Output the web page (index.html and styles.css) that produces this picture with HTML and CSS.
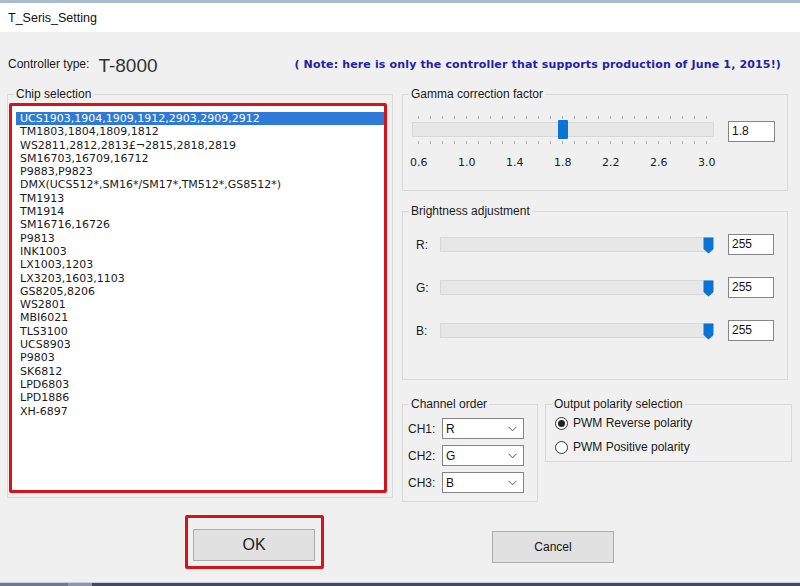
FILE: index.html
```html
<!DOCTYPE html>
<html lang="en">
  <head>
    <meta charset="UTF-8" />
    <meta name="viewport" content="width=device-width, initial-scale=1.0" />
    <title>T_Seris_Setting</title>
    <link rel="stylesheet" href="styles.css">
  </head>
  <body>
    <div class="topstrip"></div>
    <div class="titlebar">T_Seris_Setting</div>
    <div class="dialog">
      <div class="header">
        <span class="ctl-label">Controller type:</span>
        <span class="ctl-type">T-8000</span>
        <span class="note">( Note: here is only the controller that supports production of June 1, 2015!)</span>
      </div>

      <div class="main">
        <fieldset class="group chip">
          <legend>Chip selection</legend>
          <div class="redbox">
            <ul class="chiplist">
              <li class="selected">UCS1903,1904,1909,1912,2903,2909,2912</li>
              <li>TM1803,1804,1809,1812</li>
              <li>WS2811,2812,2813£¬2815,2818,2819</li>
              <li>SM16703,16709,16712</li>
              <li>P9883,P9823</li>
              <li>DMX(UCS512*,SM16*/SM17*,TM512*,GS8512*)</li>
              <li>TM1913</li>
              <li>TM1914</li>
              <li>SM16716,16726</li>
              <li>P9813</li>
              <li>INK1003</li>
              <li>LX1003,1203</li>
              <li>LX3203,1603,1103</li>
              <li>GS8205,8206</li>
              <li>WS2801</li>
              <li>MBI6021</li>
              <li>TLS3100</li>
              <li>UCS8903</li>
              <li>P9803</li>
              <li>SK6812</li>
              <li>LPD6803</li>
              <li>LPD1886</li>
              <li>XH-6897</li>
            </ul>
          </div>
        </fieldset>

        <div class="right">
          <fieldset class="group gamma">
            <legend>Gamma correction factor</legend>
            <div class="gamma-row">
              <div class="gslider">
                <div class="ticks"></div>
                <div class="track">
                  <span class="gthumb"></span>
                </div>
                <div class="ticks bottom"></div>
                <div class="scale">
                  <span>0.6</span><span>1.0</span><span>1.4</span><span>1.8</span><span>2.2</span><span>2.6</span><span>3.0</span>
                </div>
              </div>
              <div class="textbox gamma-box">1.8</div>
            </div>
          </fieldset>

          <fieldset class="group bright">
            <legend>Brightness adjustment</legend>
            <div class="brow">
              <span class="blabel">R:</span>
              <div class="track btrack">
                <svg class="bthumb" width="11" height="17" viewBox="0 0 11 17"><path d="M0.5 0.5H10.5V12L5.5 16.5L0.5 12Z" fill="#0a74d4"/></svg>
              </div>
              <div class="textbox">255</div>
            </div>
            <div class="brow">
              <span class="blabel">G:</span>
              <div class="track btrack">
                <svg class="bthumb" width="11" height="17" viewBox="0 0 11 17"><path d="M0.5 0.5H10.5V12L5.5 16.5L0.5 12Z" fill="#0a74d4"/></svg>
              </div>
              <div class="textbox">255</div>
            </div>
            <div class="brow">
              <span class="blabel">B:</span>
              <div class="track btrack">
                <svg class="bthumb" width="11" height="17" viewBox="0 0 11 17"><path d="M0.5 0.5H10.5V12L5.5 16.5L0.5 12Z" fill="#0a74d4"/></svg>
              </div>
              <div class="textbox">255</div>
            </div>
          </fieldset>

          <div class="lower">
            <fieldset class="group channel">
              <legend>Channel order</legend>
              <div class="crow">
                <span class="clabel">CH1:</span>
                <div class="combo">R<svg width="9" height="6" viewBox="0 0 9 6"><polyline points="0.5,0.8 4.5,4.8 8.5,0.8" fill="none" stroke="#555" stroke-width="1"/></svg></div>
              </div>
              <div class="crow">
                <span class="clabel">CH2:</span>
                <div class="combo">G<svg width="9" height="6" viewBox="0 0 9 6"><polyline points="0.5,0.8 4.5,4.8 8.5,0.8" fill="none" stroke="#555" stroke-width="1"/></svg></div>
              </div>
              <div class="crow">
                <span class="clabel">CH3:</span>
                <div class="combo">B<svg width="9" height="6" viewBox="0 0 9 6"><polyline points="0.5,0.8 4.5,4.8 8.5,0.8" fill="none" stroke="#555" stroke-width="1"/></svg></div>
              </div>
            </fieldset>

            <fieldset class="group polarity">
              <legend>Output polarity selection</legend>
              <div class="prow"><span class="radio checked"></span>PWM Reverse polarity</div>
              <div class="prow"><span class="radio"></span>PWM Positive polarity</div>
            </fieldset>
          </div>
        </div>
      </div>

      <div class="buttons">
        <div class="redbox okbox">
          <button class="btn ok">OK</button>
        </div>
        <button class="btn cancel">Cancel</button>
      </div>
    </div>
    <div class="taskbar"></div>
  </body>
</html>
```

FILE: styles.css
```css
* {
  box-sizing: border-box;
}
body {
  margin: 0;
  width: 800px;
  height: 586px;
  overflow: hidden;
  background-color: #f0f0f0;
  font-family: "Liberation Sans", Arial, sans-serif;
  font-size: 12px;
  color: #1a1a1a;
}
.topstrip {
  height: 3px;
  background-color: #a9bccf;
}
.titlebar {
  height: 29px;
  background-color: #fff;
  padding-left: 8px;
  display: flex;
  align-items: center;
  font-size: 12.5px;
  color: #111;
}
.dialog {
  height: 550px;
  padding: 22px 8px 0 7px;
}

/* header line */
.header {
  height: 20px;
  display: flex;
  align-items: center;
  padding-left: 1px;
}
.ctl-type {
  font-size: 19px;
  margin-left: 9px;
  padding-top: 3px;
  color: #333;
}
.note {
  margin-left: auto;
  margin-right: 11px;
  font-family: "DejaVu Sans", Verdana, sans-serif;
  font-weight: bold;
  font-size: 11px;
  letter-spacing: 0.15px;
  color: #1f23a6;
}

/* group boxes */
.main {
  display: flex;
  align-items: flex-start;
  gap: 9px;
  margin-top: 13px;
}
.group {
  margin: 0;
  padding: 0;
  border: 1px solid #d9d9d9;
  min-width: 0;
}
.group legend {
  margin-left: 6px;
  padding: 0 2px;
  line-height: 14px;
  font-size: 12px;
  color: #1a1a1a;
}
.chip {
  width: 386px;
}
.redbox {
  border: 3px solid #d3141b;
  border-radius: 2px;
}
.chip .redbox {
  margin: 2px 5px 4px 1px;
  height: 390px;
  background-color: #fff;
}
.chiplist {
  list-style: none;
  margin: 0;
  padding: 6px 0 0 4px;
  font-family: "DejaVu Sans", Verdana, sans-serif;
  font-size: 11px;
  color: #1a1a1a;
}
.chiplist li {
  height: 13.3px;
  line-height: 13px;
  padding-left: 4px;
  white-space: nowrap;
}
.chiplist li.selected {
  background-color: #2f7ad6;
  color: #fff;
}

.right {
  width: 390px;
  display: flex;
  flex-direction: column;
}
.gamma,
.bright {
  margin-right: 4px;
}

/* sliders */
.track {
  position: relative;
  height: 15px;
  background-color: #e7e7e7;
  border: 1px solid #d8d8d8;
}
.gamma-row {
  display: flex;
  align-items: flex-start;
  padding: 15px 0 20px 9px;
}
.gslider {
  width: 302px;
}
.ticks {
  height: 3px;
  width: 289px;
  margin-left: 6px;
  background: repeating-linear-gradient(90deg, #ababab 0 1px, transparent 1px 12px);
}
.gslider .track {
  margin-top: 3px;
}
.ticks.bottom {
  margin-top: 4px;
}
.gthumb {
  position: absolute;
  left: 145px;
  top: -3px;
  width: 10px;
  height: 19px;
  border-radius: 1px;
  background-color: #0a74d4;
}
.scale {
  display: flex;
  margin-top: 12px;
  margin-left: -2px;
  line-height: 14px;
  font-family: "DejaVu Sans", Verdana, sans-serif;
  font-size: 11px;
  color: #222;
}
.scale span {
  flex: none;
  width: 48px;
}
.textbox {
  width: 47px;
  height: 21px;
  padding-left: 3px;
  line-height: 19px;
  background-color: #fff;
  border: 1px solid #858585;
  color: #111;
}
.gamma-box {
  margin: 5px 0 0 14px;
}

.bright {
  margin-top: 13px;
  padding: 16px 0 38px 0;
  display: flex;
  flex-direction: column;
  gap: 22px;
}
.brow {
  display: flex;
  align-items: center;
  padding-left: 13px;
}
.blabel {
  width: 24px;
}
.btrack {
  width: 273px;
}
.bthumb {
  position: absolute;
  right: -2px;
  top: -1px;
}
.brow .textbox {
  width: 46px;
  margin-left: 15px;
}

/* channel order and polarity */
.lower {
  display: flex;
  align-items: flex-start;
  gap: 7px;
  margin-top: 17px;
}
.channel {
  width: 136px;
  padding: 7px 0 8px 0;
  display: flex;
  flex-direction: column;
  gap: 6px;
}
.crow {
  display: flex;
  align-items: center;
  padding-left: 5px;
}
.clabel {
  width: 34px;
}
.combo {
  width: 82px;
  height: 21px;
  display: flex;
  align-items: center;
  justify-content: space-between;
  padding: 0 6px 0 3px;
  background-color: #fff;
  border: 1px solid #858585;
  color: #111;
}
.polarity {
  width: 247px;
  padding: 4px 0 6px 0;
  display: flex;
  flex-direction: column;
  gap: 8px;
}
.prow {
  height: 16px;
  display: flex;
  align-items: center;
  padding-left: 9px;
}
.radio {
  width: 13px;
  height: 13px;
  margin-right: 5px;
  border: 1px solid #333;
  border-radius: 50%;
  background-color: #fff;
  display: flex;
  align-items: center;
  justify-content: center;
}
.radio.checked::after {
  content: "";
  width: 7px;
  height: 7px;
  border-radius: 50%;
  background-color: #222;
}

/* buttons */
.buttons {
  display: flex;
  align-items: flex-start;
  margin-top: 13px;
}
.okbox {
  width: 139px;
  height: 54px;
  margin-left: 178px;
  padding: 11px 0 0 5px;
}
.btn {
  width: 122px;
  height: 32px;
  background-color: #e1e1e1;
  border: 1px solid #adadad;
  font-family: "Liberation Sans", Arial, sans-serif;
  font-size: 12px;
  color: #111;
  padding: 0;
}
.ok {
  font-size: 16px;
  color: #222;
}
.cancel {
  margin: 16px 0 0 168px;
}
.taskbar {
  height: 4px;
  border-top: 1px solid #c9d2da;
  background: linear-gradient(90deg, #6b7c89 0 68px, #8a99a5 68px 92px, #3f4e5a 92px);
}
```
